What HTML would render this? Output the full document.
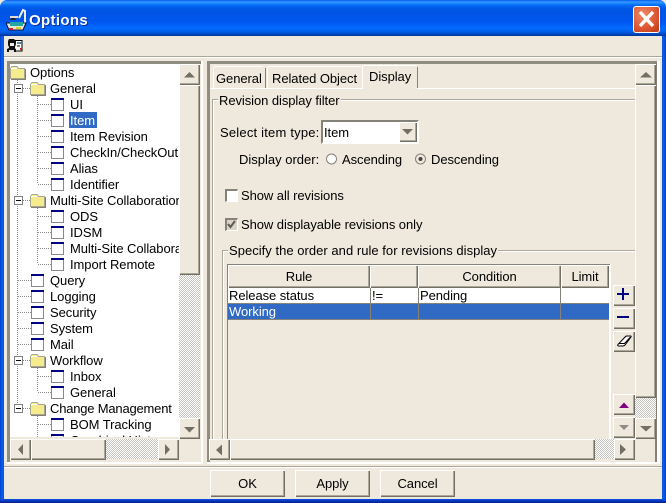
<!DOCTYPE html>
<html><head><meta charset="utf-8"><title>Options</title>
<style>
*{box-sizing:border-box}
html,body{margin:0;padding:0;width:666px;height:503px;overflow:hidden;background:#efe9dd}
body{position:relative;font:13px/16px "Liberation Sans",sans-serif;color:#000;letter-spacing:-.07px}
div,svg{position:absolute}
.t{white-space:nowrap;height:16px;margin-top:1px}
.b{background:#efe9dd;box-shadow:inset 1px 1px #fff,inset -1px -1px #716f64,inset -2px -2px #aca899}
.g{background:#aca899}.w{background:#fff}.k{background:#85827a}
.c{text-align:center}
</style></head><body>
<svg width="0" height="0" style="left:0;top:0"><defs><pattern id="ht" width="2" height="2" patternUnits="userSpaceOnUse"><rect width="2" height="2" fill="#fff"/><rect width="1" height="1" fill="#c6c4bf"/><rect x="1" y="1" width="1" height="1" fill="#c6c4bf"/></pattern></defs></svg>
<!-- window frame -->
<div style="left:0;top:0;width:666px;height:36px;border-radius:7px 7px 0 0;background:linear-gradient(#0058ee 0,#3593ff 5%,#288eff 8%,#127dff 11%,#036ffc 14%,#0262ee 18%,#0057e5 24%,#0054e3 30%,#0055eb 56%,#005bf5 66%,#026afe 76%,#0062ef 86%,#0052d6 92%,#0040ab 97%,#003092 100%)"></div>
<div style="left:0;top:36px;width:4px;height:467px;background:linear-gradient(90deg,#0042c8,#0a5cf0 50%,#0855dd)"></div>
<div style="left:662px;top:36px;width:4px;height:467px;background:linear-gradient(90deg,#0855dd,#0a5cf0 50%,#0038b0)"></div>
<div style="left:0;top:499px;width:666px;height:4px;background:linear-gradient(#0a4fdc,#0632b8 60%,#001c80)"></div>
<div class="t" style="left:29px;top:11px;height:18px;font:bold 15px/18px 'Liberation Sans',sans-serif;letter-spacing:.35px;color:#fff;text-shadow:1px 1px #0a2f9c">Options</div>
<!-- title icon -->
<svg style="left:6px;top:8px" width="21" height="23" viewBox="0 0 21 23">
<path d="M8 9 L3 12 L10 12Z" fill="#222"/><path d="M4 9h8" stroke="#ddd" stroke-width="2"/>
<path d="M13 10 L17 2 L19 3 L19 16" fill="none" stroke="#eee" stroke-width="2"/>
<path d="M0 15h20l-3 7H3z" fill="#e8e8d8" stroke="#113" stroke-width="1"/>
<rect x="4" y="14" width="13" height="4" fill="#22a8a0"/><rect x="3" y="20" width="4" height="2" fill="#c22"/><rect x="10" y="19" width="5" height="2" fill="#dc3"/>
</svg>
<!-- close -->
<div style="left:633px;top:6px;width:27px;height:27px;border:1px solid #fff;border-radius:3px;background:radial-gradient(circle at 35% 30%,#ee8a68,#dc5530 60%,#bb3a14)"></div>
<svg style="left:633px;top:6px" width="27" height="27"><path d="M7 6L20 20M20 6L7 20" stroke="#fff" stroke-width="3.4"/></svg>
<!-- toolbar -->
<svg style="left:6px;top:38px" width="17" height="15" viewBox="0 0 17 15">
<rect x="8.500" y="2.500" width="7.500" height="10.500" fill="#fff" stroke="#000"/>
<path d="M3 1h5l2 2v3l-1 3H8v1l2 1v3H1v-3l2-1V9L2 7V3z" fill="#111"/><path d="M4 5h4v3H4z" fill="#eee"/><path d="M3 12h5v2H3z" fill="#ddd"/>
<path d="M11 5h3M11 8h3" stroke="#000"/><rect x="14" y="10" width="2" height="2" fill="#c22"/><rect x="14" y="4" width="2" height="2" fill="#28b"/>
</svg>
<div class="g" style="left:4px;top:56px;width:658px;height:1px"></div>
<div class="w" style="left:4px;top:57px;width:658px;height:1px"></div>

<!-- left panel frame -->
<div class="w" style="left:7px;top:61px;width:196px;height:403px"></div>
<div style="left:7px;top:61px;width:194px;height:401px;background:#efe9dd;border-top:3px solid #8f8c80;border-left:3px solid #8f8c80"></div>
<!-- tree -->
<div style="left:10px;top:64px;width:169px;height:373px;background:#fff;overflow:hidden">
<svg style="left:0;top:0" width="169" height="390">
<g stroke="#8a8a8a" stroke-dasharray="1 1" fill="none" shape-rendering="crispEdges">
<path d="M7.500 16V344"/>
<path d="M13 24.500h7M13 136.500h7M13 296.500h7M13 344.500h7"/>
<path d="M27.500 32V120M28 40.500h13M28 56.500h13M28 72.500h13M28 88.500h13M28 104.500h13M28 120.500h13"/>
<path d="M27.500 144V200M28 152.500h13M28 168.500h13M28 184.500h13M28 200.500h13"/>
<path d="M8 216.500h13M8 232.500h13M8 248.500h13M8 264.500h13M8 280.500h13"/>
<path d="M27.500 304V328M28 312.500h13M28 328.500h13M27.500 352V380M28 360.500h13M28 376.500h13"/>
</g>
<g fill="#fff" stroke="#808080" shape-rendering="crispEdges">
<rect x="4.500" y="20.500" width="8" height="8"/><rect x="4.500" y="132.500" width="8" height="8"/><rect x="4.500" y="292.500" width="8" height="8"/><rect x="4.500" y="340.500" width="8" height="8"/>
</g>
<path d="M6 24.500h5M6 136.500h5M6 296.500h5M6 344.500h5" stroke="#000" shape-rendering="crispEdges"/>
<defs>
<g id="fo" shape-rendering="crispEdges"><path d="M.5 4.500V13.500H14.500V3.500H8.500L7 1.500H2L.5 3.500Z" fill="#f5ec8e" stroke="#a8a690"/><path d="M1 14.500H15.500V4" fill="none" stroke="#808070"/><path d="M1 3.500H7" stroke="#fff"/></g>
<g id="lf" shape-rendering="crispEdges"><rect x=".5" y=".5" width="12" height="12" fill="#fff" stroke="#8a8a8a"/><rect x="0" y="0" width="13" height="2" fill="#000080"/></g>
</defs>
<use href="#fo" x="0" y="1"/><use href="#fo" x="20" y="17"/><use href="#fo" x="20" y="129"/><use href="#fo" x="20" y="289"/><use href="#fo" x="20" y="337"/>
<use href="#lf" x="41" y="34"/><use href="#lf" x="41" y="50"/><use href="#lf" x="41" y="66"/><use href="#lf" x="41" y="82"/><use href="#lf" x="41" y="98"/><use href="#lf" x="41" y="114"/>
<use href="#lf" x="41" y="146"/><use href="#lf" x="41" y="162"/><use href="#lf" x="41" y="178"/><use href="#lf" x="41" y="194"/>
<use href="#lf" x="21" y="210"/><use href="#lf" x="21" y="226"/><use href="#lf" x="21" y="242"/><use href="#lf" x="21" y="258"/><use href="#lf" x="21" y="274"/>
<use href="#lf" x="41" y="306"/><use href="#lf" x="41" y="322"/><use href="#lf" x="41" y="354"/><use href="#lf" x="41" y="370"/>
</svg>
<div style="left:59px;top:48px;width:28px;height:16px;background:#316ac5"></div>
<div class="t" style="left:20px;top:0">Options</div>
<div class="t" style="left:40px;top:16px">General</div>
<div class="t" style="left:60px;top:32px">UI</div>
<div class="t" style="left:60px;top:48px;color:#fff">Item</div>
<div class="t" style="left:60px;top:64px">Item Revision</div>
<div class="t" style="left:60px;top:80px">CheckIn/CheckOut</div>
<div class="t" style="left:60px;top:96px">Alias</div>
<div class="t" style="left:60px;top:112px">Identifier</div>
<div class="t" style="left:40px;top:128px">Multi-Site Collaboration</div>
<div class="t" style="left:60px;top:144px">ODS</div>
<div class="t" style="left:60px;top:160px">IDSM</div>
<div class="t" style="left:60px;top:176px">Multi-Site Collaboration</div>
<div class="t" style="left:60px;top:192px">Import Remote</div>
<div class="t" style="left:40px;top:208px">Query</div>
<div class="t" style="left:40px;top:224px">Logging</div>
<div class="t" style="left:40px;top:240px">Security</div>
<div class="t" style="left:40px;top:256px">System</div>
<div class="t" style="left:40px;top:272px">Mail</div>
<div class="t" style="left:40px;top:288px">Workflow</div>
<div class="t" style="left:60px;top:304px">Inbox</div>
<div class="t" style="left:60px;top:320px">General</div>
<div class="t" style="left:40px;top:336px;letter-spacing:-.2px">Change Management</div>
<div class="t" style="left:60px;top:352px">BOM Tracking</div>
<div class="t" style="left:60px;top:368px">Graphical History</div>
</div>
<!-- left scrollbars -->
<svg style="left:179px;top:274px" width="21" height="145"><rect width="21" height="145" fill="url(#ht)"/></svg>
<div class="b" style="left:179px;top:64px;width:21px;height:21px"></div>
<div class="b" style="left:179px;top:85px;width:21px;height:190px"></div>
<div class="b" style="left:179px;top:418px;width:21px;height:21px"></div>
<svg style="left:106px;top:439px" width="53" height="20"><rect width="53" height="20" fill="url(#ht)"/></svg>
<div class="b" style="left:10px;top:439px;width:21px;height:21px"></div>
<div class="b" style="left:31px;top:439px;width:75px;height:21px"></div>
<div class="b" style="left:158px;top:439px;width:21px;height:21px"></div>

<!-- right panel frame -->
<div class="w" style="left:207px;top:61px;width:453px;height:403px"></div>
<div style="left:207px;top:61px;width:450px;height:401px;background:#efe9dd;border-top:3px solid #8f8c80;border-left:3px solid #8f8c80"></div>
<div class="k" style="left:655px;top:62px;width:2px;height:400px"></div>
<!-- tabs -->
<div class="w" style="left:210px;top:88px;width:426px;height:1px"></div>
<div class="w" style="left:213px;top:67px;width:1px;height:21px"></div>
<div class="w" style="left:214px;top:66px;width:49px;height:1px"></div>
<div class="k" style="left:265px;top:68px;width:1px;height:20px"></div>
<div class="w" style="left:267px;top:67px;width:1px;height:21px"></div>
<div class="w" style="left:268px;top:66px;width:93px;height:1px"></div>
<div class="w" style="left:362px;top:66px;width:1px;height:23px"></div>
<div class="w" style="left:363px;top:65px;width:53px;height:1px"></div>
<div style="left:363px;top:66px;width:54px;height:23px;background:#efe9dd"></div>
<div class="k" style="left:417px;top:67px;width:1px;height:21px"></div>
<div class="t" style="left:216px;top:70px">General</div>
<div class="t" style="left:272px;top:70px">Related Object</div>
<div class="t" style="left:369px;top:68px">Display</div>
<!-- group 1 -->
<div class="g" style="left:212px;top:99px;width:424px;height:1px"></div>
<div class="w" style="left:213px;top:100px;width:423px;height:1px"></div>
<div class="g" style="left:212px;top:99px;width:1px;height:340px"></div>
<div class="w" style="left:213px;top:100px;width:1px;height:339px"></div>
<div class="t" style="left:218px;top:92px;padding:0 1px;background:#efe9dd">Revision display filter</div>
<div class="t" style="left:220px;top:124px;letter-spacing:.2px">Select item type:</div>
<!-- combo -->
<div style="left:321px;top:120px;width:98px;height:24px;background:#fff;border:2px solid #85827a;border-right-color:#fff;border-bottom-color:#fff"></div>
<div style="left:323px;top:122px;width:76px;height:20px;background:#fff"></div>
<div class="t" style="left:324px;top:124px">Item</div>
<div class="b" style="left:399px;top:122px;width:18px;height:20px"></div>
<svg style="left:402px;top:129px" width="12" height="7"><path d="M0 0h11l-5.500 5.500z" fill="#716f64"/></svg>
<!-- radios -->
<div class="t" style="left:239px;top:151px;letter-spacing:0">Display order:</div>
<div class="t" style="left:342px;top:151px">Ascending</div>
<div class="t" style="left:431px;top:151px">Descending</div>
<svg style="left:324px;top:152px" width="15" height="15"><circle cx="7.500" cy="7" r="5" fill="#fff" stroke="#85827a"/></svg>
<svg style="left:413px;top:152px" width="15" height="15"><circle cx="7.500" cy="7" r="5" fill="#efe9dd" stroke="#85827a"/><circle cx="7.500" cy="7" r="2" fill="#444"/></svg>
<!-- checks -->
<div style="left:225px;top:189px;width:13px;height:13px;background:#fff;border:2px solid #85827a;border-right:1px solid #fff;border-bottom:1px solid #fff"></div>
<div class="t" style="left:241px;top:187px">Show all revisions</div>
<div style="left:225px;top:218px;width:13px;height:13px;background:#d8d4c8;border:2px solid #85827a;border-right:1px solid #fff;border-bottom:1px solid #fff"></div>
<svg style="left:226px;top:219px" width="11" height="11"><path d="M2 5l2.500 3L9 2" fill="none" stroke="#5c5a52" stroke-width="2"/></svg>
<div class="t" style="left:241px;top:216px">Show displayable revisions only</div>
<!-- group 2 -->
<div class="g" style="left:222px;top:250px;width:414px;height:1px"></div>
<div class="w" style="left:222px;top:251px;width:414px;height:1px"></div>
<div class="g" style="left:222px;top:250px;width:1px;height:189px"></div>
<div class="w" style="left:223px;top:251px;width:1px;height:188px"></div>
<div class="t" style="left:228px;top:242px;padding:0 1px;background:#efe9dd;letter-spacing:.03px">Specify the order and rule for revisions display</div>
<!-- table -->
<div class="w" style="left:609px;top:264px;width:2px;height:175px"></div>
<div class="k" style="left:227px;top:264px;width:383px;height:1px"></div>
<div class="k" style="left:227px;top:264px;width:1px;height:175px"></div>
<div class="b c" style="left:228px;top:265px;width:142px;height:23px;line-height:23px">Rule</div>
<div class="b" style="left:370px;top:265px;width:48px;height:23px"></div>
<div class="b c" style="left:418px;top:265px;width:143px;height:23px;line-height:23px">Condition</div>
<div class="b c" style="left:561px;top:265px;width:48px;height:23px;line-height:23px">Limit</div>
<div class="w" style="left:228px;top:288px;width:381px;height:16px"></div>
<div style="left:228px;top:304px;width:381px;height:16px;background:#316ac5"></div>
<div class="k" style="left:228px;top:303px;width:381px;height:1px"></div>
<div class="k" style="left:228px;top:319px;width:381px;height:1px"></div>
<div class="k" style="left:370px;top:288px;width:1px;height:32px"></div>
<div class="k" style="left:418px;top:288px;width:1px;height:32px"></div>
<div class="k" style="left:560px;top:288px;width:1px;height:32px"></div>
<div class="t" style="left:229px;top:287px">Release status</div>
<div class="t" style="left:372px;top:287px">!=</div>
<div class="t" style="left:420px;top:287px">Pending</div>
<div class="t" style="left:229px;top:303px;color:#fff">Working</div>
<!-- side buttons -->
<div class="b" style="left:613px;top:285px;width:22px;height:21px"></div>
<div class="b" style="left:613px;top:308px;width:22px;height:21px"></div>
<div class="b" style="left:613px;top:331px;width:22px;height:21px"></div>
<div class="b" style="left:613px;top:394px;width:22px;height:21px"></div>
<div class="b" style="left:613px;top:417px;width:22px;height:21px"></div>
<svg style="left:613px;top:285px" width="22" height="70">
<path d="M4 9h12M10 3v12M4 32h12" stroke="#000080" stroke-width="2" fill="none"/>
<path d="M5 59.500L12.500 51.500Q13 51 14 51H17.500Q18.500 51 18 52L12 60Q11 61 10 61H6Q4 61 5 59.500Z" fill="#fff" stroke="#000"/><path d="M5.500 58.500H11.500L17.500 52" fill="none" stroke="#000"/>
</svg>
<svg style="left:613px;top:394px" width="22" height="44">
<path d="M6 14h10l-5-5.500z" fill="#800080"/><path d="M6 31h10l-5 5z" fill="#8f8c88"/>
</svg>
<!-- right scrollbars -->
<svg style="left:635px;top:397px" width="21" height="21"><rect width="21" height="21" fill="url(#ht)"/></svg>
<div class="b" style="left:635px;top:64px;width:21px;height:21px"></div>
<div class="b" style="left:635px;top:85px;width:21px;height:313px"></div>
<div class="b" style="left:635px;top:418px;width:21px;height:21px"></div>
<svg style="left:595px;top:439px" width="20" height="20"><rect width="20" height="20" fill="url(#ht)"/></svg>
<div class="b" style="left:209px;top:439px;width:21px;height:21px"></div>
<div class="b" style="left:230px;top:439px;width:365px;height:21px"></div>
<div class="b" style="left:614px;top:439px;width:21px;height:21px"></div>
<svg style="left:0;top:0" width="666" height="503">
<g fill="#716f64">
<path d="M640 77.500h12l-6-5.500zM640 426h12l-6 5.500zM216 450l6-5.500v11zM620 444v11l6-5.500z"/>
<path d="M184 77.500h11l-5.500-5.500zM184 427h11l-5.500 5.500zM23 444v11l-5-5.500zM165 444v11l5-5.500z"/>
</g>
</svg>
<!-- bottom -->
<div class="g" style="left:4px;top:466px;width:658px;height:1px"></div>
<div class="w" style="left:4px;top:467px;width:658px;height:1px"></div>
<div class="b c" style="left:210px;top:470px;width:75px;height:27px;line-height:28px">OK</div>
<div class="b c" style="left:295px;top:470px;width:75px;height:27px;line-height:28px">Apply</div>
<div class="b c" style="left:380px;top:470px;width:75px;height:27px;line-height:28px">Cancel</div>
</body></html>
